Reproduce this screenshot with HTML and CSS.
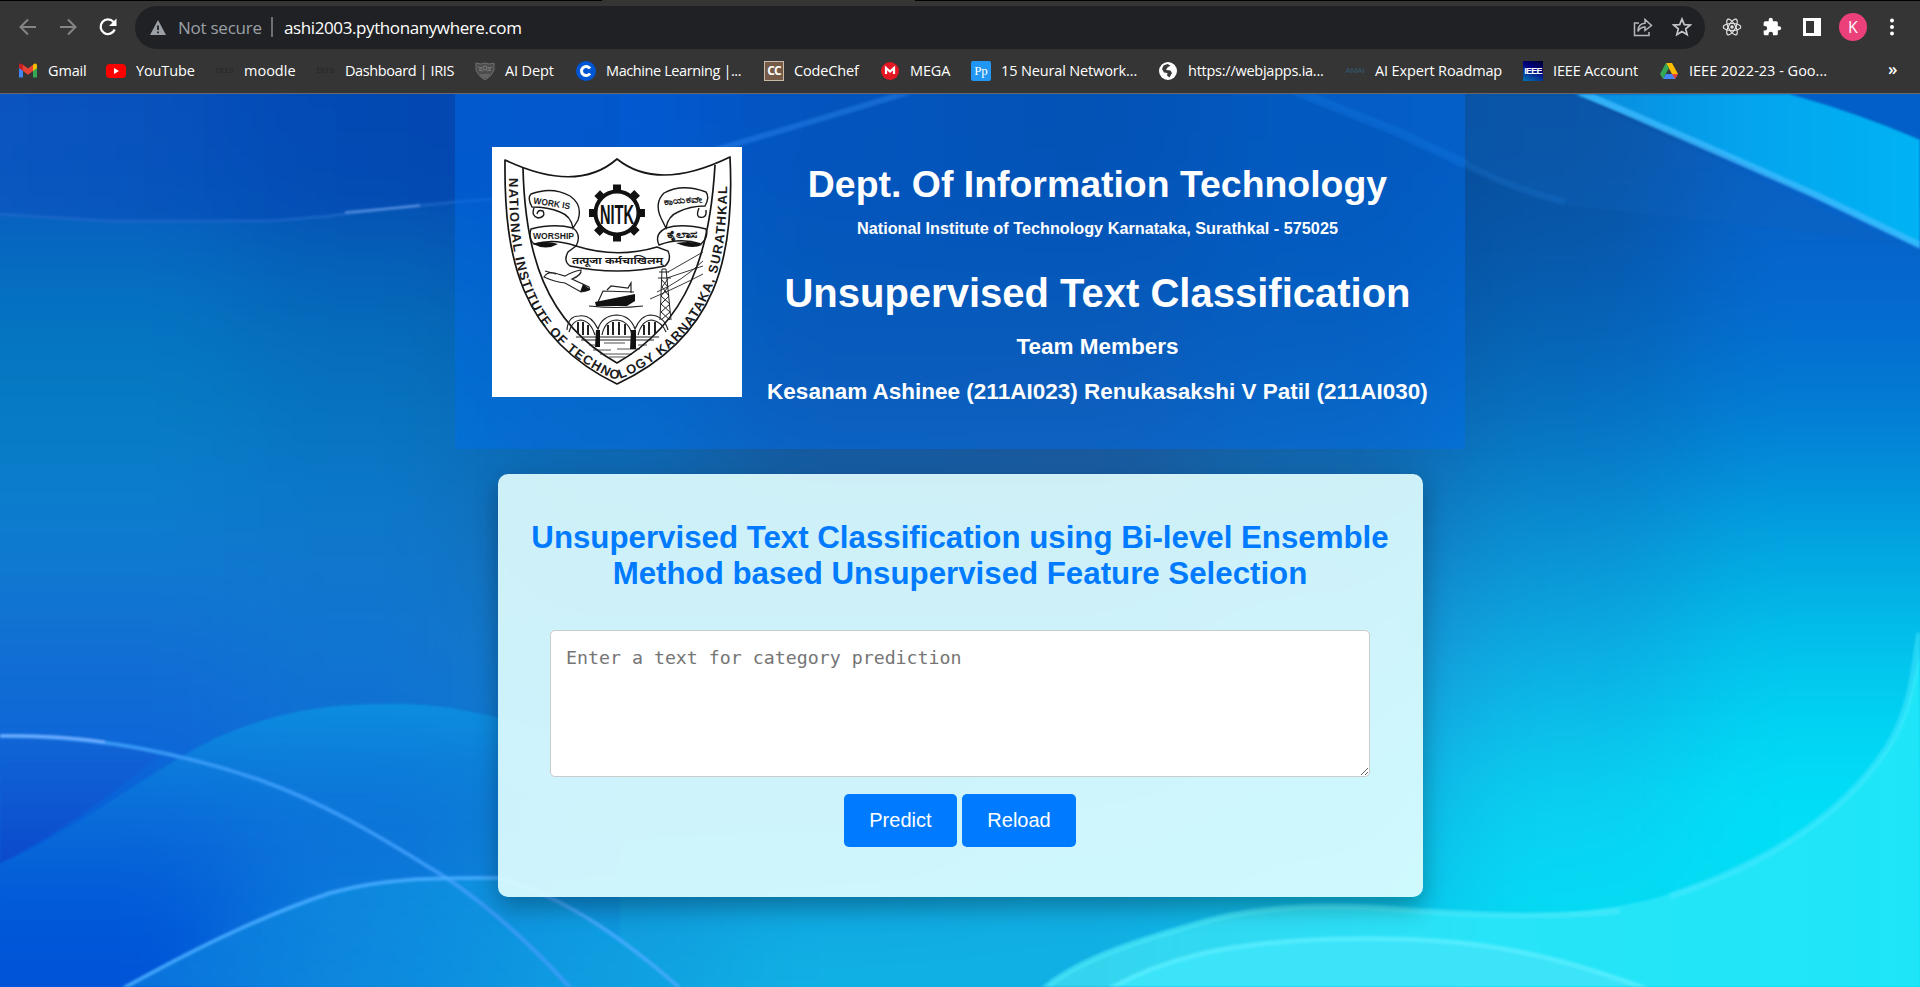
FILE: index.html
```html
<!DOCTYPE html>
<html lang="en">
<head>
<meta charset="utf-8">
<title>Unsupervised Text Classification</title>
<link rel="stylesheet" href="styles.css">
</head>
<body>
<div class="browser">
  <div class="tabstrip"><span class="active-tab"></span></div>
  <div class="toolbar">
    <svg class="nav" viewBox="0 0 20 20"><path d="M18 10H3M10 2.500L2.500 10L10 17.500" fill="none" stroke="#858585" stroke-width="2"/></svg>
    <svg class="nav" viewBox="0 0 20 20"><path d="M2 10H17M10 2.500L17.500 10L10 17.500" fill="none" stroke="#858585" stroke-width="2"/></svg>
    <svg class="nav" viewBox="0 0 20 20"><path d="M16.700 12.500A7.300 7.300 0 1 1 15.500 5" fill="none" stroke="#fff" stroke-width="2.300"/><path d="M18.500 1.500V9H11Z" fill="#fff"/></svg>
    <div class="omnibox">
      <svg class="warn" viewBox="0 0 16 15"><path d="M8 0L16 15H0Z" fill="#9aa0a6"/><path d="M8 5.500V10M8 11.500V13.200" stroke="#202124" stroke-width="1.800"/></svg>
      <span class="secure">Not secure</span>
      <span class="divider"></span>
      <span class="url">ashi2003.pythonanywhere.com</span>
      <svg class="share" viewBox="0 0 20 20"><path d="M6 6H1.500V18.500H16V15M5 14.500C5 9 8 6.500 12 6.300V2.500L18.500 8.500L12 13.500V10C9 10 6.500 11.500 5 14.500Z" fill="none" stroke="#b4b7ba" stroke-width="1.500"/></svg>
      <svg class="star" viewBox="0 0 20 20"><path d="M10 2L12.300 7.600L18.300 8L13.700 11.900L15.200 17.800L10 14.600L4.800 17.800L6.300 11.900L1.700 8L7.700 7.600Z" fill="none" stroke="#c4c7ca" stroke-width="1.700"/></svg>
    </div>
    <div class="actions">
      <svg viewBox="0 0 20 20"><g fill="none" stroke="#e4e4e4" stroke-width="1.200"><ellipse cx="10" cy="10" rx="8.800" ry="3.500"/><ellipse cx="10" cy="10" rx="8.800" ry="3.500" transform="rotate(60 10 10)"/><ellipse cx="10" cy="10" rx="8.800" ry="3.500" transform="rotate(120 10 10)"/></g><circle cx="10" cy="10" r="1.700" fill="#e4e4e4"/></svg>
      <svg viewBox="0 0 24 24"><path d="M20.500 11H19V7a2 2 0 0 0-2-2h-4V3.500a2.500 2.500 0 0 0-5 0V5H4a2 2 0 0 0-2 2v3.800h1.500a2.700 2.700 0 0 1 0 5.400H2V20a2 2 0 0 0 2 2h3.800v-1.500a2.700 2.700 0 0 1 5.400 0V22H17a2 2 0 0 0 2-2v-4h1.500a2.500 2.500 0 0 0 0-5Z" fill="#fff"/></svg>
      <svg viewBox="0 0 20 20"><path d="M1 1H19V19H1ZM4 4V16H12V4Z" fill="#fff" fill-rule="evenodd"/></svg>
      <span class="avatar">K</span>
      <svg class="dots" viewBox="0 0 20 20"><g fill="#fff"><circle cx="10" cy="3.500" r="2"/><circle cx="10" cy="10" r="2"/><circle cx="10" cy="16.500" r="2"/></g></svg>
    </div>
  </div>
  <div class="bookmarks">
    <div class="bm"><svg viewBox="0 0 20 20"><path d="M1 5V16.500H5V9Z" fill="#4285f4"/><path d="M15 9V16.500H19V5Z" fill="#34a853"/><path d="M1 5.500V4C1 2.500 3 2 4.200 3L5 3.700V10L1 7Z" fill="#c5221f"/><path d="M15 3.700L16 3C17.500 2 19 3 19 4.500V7L15 10Z" fill="#fbbc04"/><path d="M5 3.700L10 7.500L15 3.700V10L10 13.700L5 10Z" fill="#ea4335"/></svg><span>Gmail</span></div>
    <div class="bm"><svg viewBox="0 0 20 20"><rect y="3" width="20" height="14" rx="4" fill="#f00"/><path d="M8 7L13 10L8 13Z" fill="#fff"/></svg><span>YouTube</span></div>
    <div class="bm"><b class="iris">IRIS</b><span class="loose">moodle</span></div>
    <div class="bm"><b class="iris">IRIS</b><span class="tight">Dashboard | IRIS</span></div>
    <div class="bm"><svg viewBox="0 0 20 20"><path d="M1 2Q6 4 10 2Q14 4 19 2V9Q17 15 10 19Q3 15 1 9Z" fill="#4c4c4c" stroke="#707070"/><path d="M3 6L7 7L4 9L8 10M17 6L13 7L16 9L12 10M5 14H15M7 16H13" fill="none" stroke="#7b7b7b"/><circle cx="10" cy="7" r="2" fill="none" stroke="#808080"/></svg><span>AI Dept</span></div>
    <div class="bm"><svg viewBox="0 0 20 20"><circle cx="10" cy="10" r="10" fill="#0056d2"/><path d="M14 7.500A4.600 4.600 0 1 0 14 12.500" fill="none" stroke="#fff" stroke-width="3"/></svg><span class="tight">Machine Learning |...</span></div>
    <div class="bm"><b class="cc">CC</b><span>CodeChef</span></div>
    <div class="bm"><svg viewBox="0 0 20 20"><circle cx="10" cy="10" r="9" fill="#e21722"/><path d="M6 13V7L10 10.500L14 7V13" fill="none" stroke="#fff" stroke-width="2.200"/></svg><span>MEGA</span></div>
    <div class="bm"><b class="pp">Pp</b><span>15 Neural Network...</span></div>
    <div class="bm"><svg viewBox="0 0 20 20"><circle cx="10" cy="10" r="9" fill="#fff"/><path d="M5.500 4.500L9.500 3L12.500 4.500L9.500 6.500L8 9L12.500 9.500L14 12L11.500 16.500L9 14.500L9.500 12L6 11.500L4 8Z" fill="#3a3a3a"/></svg><span class="snug">https://webjapps.ia...</span></div>
    <div class="bm"><b class="amai">AMAI</b><span>AI Expert Roadmap</span></div>
    <div class="bm"><b class="ieee">IEEE</b><span>IEEE Account</span></div>
    <div class="bm"><svg viewBox="0 0 20 20"><path d="M7 2H13L19 13H13Z" fill="#fbbc04"/><path d="M7 2L10 7L4 18L1 13Z" fill="#34a853"/><path d="M7 13H19L16 18H4Z" fill="#4285f4"/><path d="M13 13H19L16 18Z" fill="#ea4335"/></svg><span class="loose">IEEE 2022-23 - Goo...</span></div>
    <span class="more">»</span>
  </div>
</div>

<main class="page">
  <svg class="backdrop" viewBox="-240 -240 2400 1373" preserveAspectRatio="none">
      <g><path fill="#0a56c0" d="M-300-300H240V128H-300Z"/><path fill="#0449b2" d="M240-300h240V128H240Z"/><path fill="#0546b8" d="M480-300h240V128H480Z"/><path fill="#073f94" d="M720-300h240V128H720Z"/><path fill="#073b88" d="M960-300h240V128H960Z"/><path fill="#054898" d="M1200-300h240V128h-240Z"/><path fill="#0850a0" d="M1440-300h240V128h-240Z"/><path fill="#0860c4" d="M1680-300h540V128h-540Z"/></g>
      <g><path fill="#0470c0" d="M-300 128H240V256H-300Z"/><path fill="#0566b8" d="M240 128h240V256H240Z"/><path fill="#0558ac" d="M480 128h240V256H480Z"/><path fill="#084890" d="M720 128h240V256H720Z"/><path fill="#08488e" d="M960 128h240V256H960Z"/><path fill="#084e98" d="M1200 128h240V256h-240Z"/><path fill="#065cb0" d="M1440 128h240V256h-240Z"/><path fill="#0466ce" d="M1680 128h540V256h-540Z"/></g>
      <g><path fill="#067cc4" d="M-300 256H240V384H-300Z"/><path fill="#0674c0" d="M240 256h240V384H240Z"/><path fill="#0a66b0" d="M480 256h240V384H480Z"/><path fill="#165094" d="M720 256h240V384H720Z"/><path fill="#1c5092" d="M960 256h240V384H960Z"/><path fill="#105ea4" d="M1200 256h240V384h-240Z"/><path fill="#0670c0" d="M1440 256h240V384h-240Z"/><path fill="#037cd4" d="M1680 256h540V384h-540Z"/></g>
      <g><path fill="#0f7cd0" d="M-300 384H240V512H-300Z"/><path fill="#0f78cc" d="M240 384h240V512H240Z"/><path fill="#146cb4" d="M480 384h720V512H480Z"/><path fill="#1474bc" d="M1200 384h240V512h-240Z"/><path fill="#0a90d4" d="M1440 384h240V512h-240Z"/><path fill="#02a4e0" d="M1680 384h540V512h-540Z"/></g>
      <g><path fill="#126cd4" d="M-300 512H240V640H-300Z"/><path fill="#1074d2" d="M240 512h240V640H240Z"/><path fill="#147cc8" d="M480 512h720V640H480Z"/><path fill="#1c90d4" d="M1200 512h240V640h-240Z"/><path fill="#0cb0e4" d="M1440 512h240V640h-240Z"/><path fill="#02c8ee" d="M1680 512h540V640h-540Z"/></g>
      <g><path fill="#0a64da" d="M-300 640H240V768H-300Z"/><path fill="#0e6cd8" d="M240 640h240V768H240Z"/><path fill="#0c80d0" d="M480 640h480V768H480Z"/><path fill="#10a0dc" d="M960 640h240V768H960Z"/><path fill="#10ace2" d="M1200 640h240V768h-240Z"/><path fill="#0ad0f0" d="M1440 640h240V768h-240Z"/><path fill="#00e0f8" d="M1680 640h540V768h-540Z"/></g>
      <g><path fill="#0054d8" d="M-300 768H240V1200H-300Z"/><path fill="#0c80dc" d="M240 768h240V1200H240Z"/><path fill="#10a0e0" d="M480 768h240V1200H480Z"/><path fill="#10b0e4" d="M720 768h480V1200H720Z"/><path fill="#0cc0e8" d="M1200 768h240V1200h-240Z"/><path fill="#04dcf4" d="M1440 768h780V1200h-780Z"/></g>
  </svg>
  <svg class="waves" viewBox="0 0 1920 893" preserveAspectRatio="none">
    <defs>
      <linearGradient id="top" x1="0" y1="0" x2="1" y2="0"><stop offset="0" stop-color="#0c54c0"/><stop offset=".45" stop-color="#034cb8"/><stop offset="1" stop-color="#0444a8"/></linearGradient>
      <linearGradient id="hill" x1="0" y1="0" x2="0" y2="1"><stop offset="0" stop-color="#0c92e2" stop-opacity=".85"/><stop offset=".5" stop-color="#0c78d8" stop-opacity=".3"/><stop offset="1" stop-color="#0060d8" stop-opacity="0"/></linearGradient>
      <linearGradient id="deep" x1="0" y1="0" x2="0" y2="1"><stop offset="0" stop-color="#1464d4" stop-opacity=".6"/><stop offset="1" stop-color="#0c48cc"/></linearGradient>
      <linearGradient id="low" x1="0" y1="0" x2="1" y2="0"><stop offset="0" stop-color="#0c78dc"/><stop offset="1" stop-color="#10a4e2"/></linearGradient>
      <linearGradient id="band" x1="0" y1="0" x2="1" y2="0"><stop offset="0" stop-color="#0a88dc"/><stop offset=".5" stop-color="#04a4ee"/><stop offset="1" stop-color="#00b4f4"/></linearGradient>
      <linearGradient id="wave" x1="0" y1="0" x2="1" y2="0"><stop offset="0" stop-color="#36d2ee"/><stop offset=".5" stop-color="#28e4f8"/><stop offset="1" stop-color="#1ee6f8"/></linearGradient>
    </defs>
      <path d="M-10-10H620V95L455 108L385 115L270 128H110L-10 120Z" fill="url(#top)" opacity=".6"/>
      <path d="M-5 120L110 127H270L330 122L385 115L455 108L620 94" fill="none" stroke="#2c72d0" stroke-width="3" opacity=".5"/>
      <path d="M345 118.500L385 115L420 111.500" fill="none" stroke="#6298e6" stroke-width="2.500" opacity=".8"/>
      <path d="M-5 642C70 640 120 648 160 662C110 700 60 741 -5 772Z" fill="url(#deep)"/>
      <path d="M-5 772C70 740 130 691 200 652C260 621 320 610 380 610C450 608 500 622 620 660V893H-5Z" fill="url(#hill)"/>
      <path d="M110 900C180 863 250 826 330 799C390 782 450 784 500 784C550 800 630 850 690 900Z" fill="url(#low)" opacity=".8"/>
      <path d="M-5 642C100 640 190 662 260 686C340 715 400 756 445 783C500 820 540 860 572 896" fill="none" stroke="#3c9cf8" stroke-width="4" opacity=".9"/>
      <path d="M-5 642C40 641 70 643 105 648" fill="none" stroke="#70acff" stroke-width="3"/>
      <path d="M120 896C180 863 250 826 330 799C390 782 450 784 500 784C570 805 630 850 682 896" fill="none" stroke="#48acff" stroke-width="4" opacity=".85"/>
      <path d="M620 84C700 60 800 32 915-4" fill="none" stroke="#5298ee" stroke-width="6" opacity=".45"/>
      <path d="M1290-5L1400 39L1465 70Q1510 95 1570 112Q1700 125 1900 150L1560-5Z" fill="#1064bc" opacity=".3"/>
      <path d="M1290-5L1400 39L1465 70" fill="none" stroke="#207ad4" stroke-width="9" opacity=".4"/>
      <path d="M1465 70Q1510 95 1565 108" fill="none" stroke="#207ad4" stroke-width="7" opacity=".25"/>
      <path d="M1560-5Q1690 43 1820 105L1930 158V-5Z" fill="url(#band)"/>
      <path d="M1770-5Q1850 15 1930 50V-5Z" fill="#025ec8"/>
      <path d="M1580-2Q1690 45 1820 103L1930 156" fill="none" stroke="#40bcff" stroke-width="7" opacity=".75"/>
      <path d="M1930 520C1914 570 1914 615 1887 654C1840 725 1760 772 1670 800C1590 824 1500 823 1420 817C1320 808 1250 812 1186 833C1120 852 1070 870 1038 900H1930Z" fill="url(#wave)"/>
      <path d="M1920 539C1914 575 1912 615 1887 654C1840 725 1760 772 1670 802" fill="none" stroke="#4aeaff" stroke-width="7" opacity=".5"/>
      <path d="M1620 817C1540 825 1480 820 1420 817C1320 808 1250 812 1186 833C1120 852 1070 870 1038 900" fill="none" stroke="#4ceafa" stroke-width="6" opacity=".6"/>
      <path d="M1100 900C1160 865 1220 849 1330 845C1460 841 1540 855 1650 896Z" fill="#3ce4fa"/>
      <path d="M1100 900C1160 865 1220 849 1330 845C1460 841 1540 855 1650 896" fill="none" stroke="#5cf0ff" stroke-width="5" opacity=".7"/>
  </svg>

  <header class="banner">
    <svg class="crest" viewBox="0 0 250 250">
      <rect width="250" height="250" fill="#fff"/>
      <g fill="none" stroke="#161616" stroke-width="1.700" stroke-linejoin="round">
        <path d="M13 13Q85 47 125 12Q166 45 238 10C243 110 225 190 125 237C28 190 12 110 13 13Z"/>
        <path d="M31 21C33 105 52 175 125 216C197 175 218 105 223 18"/>
      </g>
      <path id="rim" d="M17 31C17 112 26 185 114 228.500Q125 235 136 228.500C224 185 236 112 235 27" fill="none"/>
      <text class="rim-text"><textPath href="#rim" textLength="486" lengthAdjust="spacing">NATIONAL INSTITUTE OF TECHNOLOGY KARNATAKA, SURATHKAL</textPath></text>
      <g fill="#111"><g id="teeth"><path d="M121 37.500H129V44H121ZM121 88H129V94.500H121ZM97 62H103V70H97ZM147 62H153V70H147Z"/></g><use href="#teeth" transform="rotate(45 125 66)"/></g>
      <circle cx="125" cy="66" r="21.500" fill="#fff" stroke="#111" stroke-width="4"/>
      <text class="nitk" x="108" y="76.500" textLength="34" lengthAdjust="spacingAndGlyphs">NITK</text>
      <g fill="none" stroke="#191919" stroke-width="1.400">
        <path d="M40 60Q35 51 39 47Q60 39 78 49Q91 58 86 73L81 81Q79 69 68 65Q56 60 40 60ZM42 61Q39 69 46 71Q54 70 51 64Q46 62 45 67M81 81Q90 88 84 99Q62 91 42 97Q36 91 39 82Q62 76 81 81M84 99L76 105Q71 114 78 119Q125 129 173 119Q180 113 176 104L165 100Q125 112 84 99"/>
        <path d="M213 59Q218 50 214 45Q190 36 172 46Q162 56 169 71L174 81Q176 69 186 65Q198 59 213 59ZM207 61Q204 68 207 70Q215 72 214 63M174 81Q162 87 167 98Q188 90 209 97Q217 90 214 82Q190 76 174 81"/>
      </g>
      <path d="M41 97Q54 93 66 97Q54 104 41 97ZM184 96Q202 93 210 98Q200 103 184 96Z" fill="#111"/>
      <g class="ribbon-text">
        <text x="41" y="56.500" transform="rotate(9 41 57)" textLength="37" lengthAdjust="spacingAndGlyphs">WORK IS</text>
        <text x="41" y="92" textLength="41" lengthAdjust="spacingAndGlyphs">WORSHIP</text>
        <text x="172" y="58" transform="rotate(-4 172 58)" textLength="39" lengthAdjust="spacingAndGlyphs">ಕಾಯಕವೇ</text>
        <text x="175" y="91" textLength="31" lengthAdjust="spacingAndGlyphs">ಕೈಲಾಸ</text>
        <text x="80" y="117" textLength="91" lengthAdjust="spacingAndGlyphs">तत्पूजा कर्मचाखिलम्</text>
      </g>
      <g fill="none" stroke="#222" stroke-width="1.200">
        <path d="M52 130Q56 123 66 127L73 129Q82 124 89 123Q90 128 80 132L97 140Q99 144 89 145L73 136Q63 135 52 130ZM64 127L53 124"/>
        <path d="M176 125L211 105M175 131L211 119M158 152Q188 139 211 127M165 145Q190 134 211 114" stroke-width=".9"/>
        <path d="M168 173L170 122H174L179 173M169 132L176 140L169 149L178 157L169 165L178 173M176 132L170 140L177 149L169 157L178 165L169 173M167 125H177M166 131H179" stroke-width="1"/>
        <path d="M97 159Q125 162 151 159M106 155L111 144L142 145M115 143L119 139L136 141L139 136V146"/>
        <path d="M75 183Q76 169 87 169Q99 167 106 182Q110 169 124 168Q138 168 143 182Q149 168 159 168Q172 169 176 183M77 185Q80 174 88 173Q98 173 103 188M110 188Q113 173 125 173Q137 174 140 188M146 188Q150 173 160 173Q170 175 174 185M84 190H167M89 193H162"/>
        <path d="M86 175v12M91 175v13M96 178v10M116 178v10M121 175v13M127 175v13M133 177v11M152 178v10M157 175v13M163 175v12" stroke-width="2"/>
        <path d="M97 198H103M112 196H133M146 198H155M101 203H119M125 202H148M108 207H140M117 210H133" stroke-width=".8"/>
      </g>
      <path d="M103 155L143 147V154L135 159H104ZM91 137L99 143L88 145ZM104 183H108V200H103ZM139 183H144V202H138Z" fill="#111"/>
    </svg>
    <div class="titles">
      <h3 class="dept">Dept. Of Information Technology</h3>
      <p class="inst">National Institute of Technology Karnataka, Surathkal - 575025</p>
      <h1 class="proj">Unsupervised Text Classification</h1>
      <p class="team">Team Members</p>
      <p class="names">Kesanam Ashinee (211AI023) Renukasakshi V Patil (211AI030)</p>
    </div>
  </header>

  <section class="card">
    <h2 class="card-title">Unsupervised Text Classification using Bi-level Ensemble<br>Method based Unsupervised Feature Selection</h2>
    <textarea class="entry" placeholder="Enter a text for category prediction"></textarea>
    <div class="buttons"><button>Predict</button><button>Reload</button></div>
  </section>
</main>
</body>
</html>
```
FILE: styles.css
```css
* { box-sizing: border-box; }
body { margin: 0; width: 1920px; height: 987px; overflow: hidden; font-family: "Liberation Sans", Arial, sans-serif; }

/* browser frame */
.browser { height: 94px; background: #353535; border-bottom: 1px solid #686868; font-family: "Open Sans", "Noto Sans", sans-serif; color: #fff; }
.tabstrip { height: 1px; background: #000; padding-left: 602px; }
.active-tab { display: block; width: 313px; height: 1px; background: #353535; }
.toolbar { height: 52px; display: flex; align-items: center; padding-left: 18px; }
.nav { width: 20px; height: 20px; margin-right: 20px; }
.omnibox { width: 1570px; height: 43px; margin-left: -3px; border-radius: 22px; background: #202124; display: flex; align-items: center; padding: 0 13px 0 15px; font-size: 17px; }
.warn { width: 16px; height: 15px; margin-right: 12px; }
.secure { width: 93px; color: #9aa0a6; white-space: nowrap; letter-spacing: -0.25px; }
.divider { width: 2px; height: 20px; background: #6c6f73; margin-right: 11px; }
.url { flex: 1; white-space: nowrap; letter-spacing: -0.4px; }
.share { width: 20px; height: 20px; margin-right: 19px; }
.star { width: 20px; height: 20px; }
.actions { display: flex; align-items: center; padding-left: 17px; }
.actions svg { width: 20px; height: 20px; margin-right: 20px; }
.avatar { width: 28px; height: 28px; margin-right: 15px; margin-left: -3px; border-radius: 50%; background: #ec407a; font-size: 16px; line-height: 28px; text-align: center; }
.actions .dots { margin-right: 0; }
.bookmarks { height: 35px; display: grid; grid-template-columns: 88px 108px 101px 160px 101px 188px 116px 91px 187px 187px 178px 136px 229px auto; padding-left: 18px; align-items: center; font-size: 14.5px; letter-spacing: -0.14px; }
.bm { display: flex; align-items: center; gap: 10px; white-space: nowrap; }
.bm span { margin-top: -1px; }
.bm .loose { letter-spacing: 0; }
.bm .snug { letter-spacing: -0.25px; }
.bm .tight { letter-spacing: -0.4px; }
.bm svg, .bm b { width: 20px; height: 20px; flex: none; line-height: 20px; text-align: center; }
.bm .iris { color: #252525; font: 8px/20px "Liberation Mono", monospace; }
.bm .cc { background: #755a48; border: 1px solid #c9baa8; font-size: 12px; line-height: 17px; letter-spacing: -1px; }
.bm .pp { background: #2196f3; border-radius: 2px; font: 13px/19px "Liberation Serif", serif; }
.bm .amai { color: #315a72; font: 8px/20px "Liberation Sans", sans-serif; }
.bm .ieee { background: linear-gradient(25deg, #0078b4, #000080 60%, #000030); font: bold 9px/20px "Liberation Sans", sans-serif; letter-spacing: -0.7px; }
.more { font-size: 17px; font-weight: 600; margin-top: -4px; }

/* page */
.page { position: relative; height: 893px; overflow: hidden; display: flex; flex-direction: column; align-items: center; }
.backdrop { position: absolute; top: -240px; left: -240px; width: 2400px; height: 1373px; filter: blur(58px); }
.waves { position: absolute; inset: 0; width: 1920px; height: 893px; filter: blur(1.2px); }
.banner { position: relative; width: 1010px; height: 355px; padding: 53px 37px 0; display: flex; gap: 25px; background: rgba(0, 110, 240, .45); color: #fff; }
.crest { width: 250px; height: 250px; flex: none; }
.rim-text { font: bold 13px "Liberation Sans", sans-serif; fill: #1b1b1b; }
.nitk { font: bold 27px "Liberation Sans", sans-serif; fill: #111; }
.ribbon-text { font: bold 9px "Liberation Sans", "Noto Sans", sans-serif; fill: #1b1b1b; }
.titles { width: 661px; text-align: center; font-weight: bold; white-space: nowrap; display: flex; flex-direction: column; align-items: center; }
.titles > * { margin: 0; }
.dept { font-size: 37.44px; line-height: 44px; margin-top: 15px; }
.inst { font-size: 16.25px; line-height: 18px; margin-top: 13px; }
.proj { font-size: 40px; line-height: 46px; margin-top: 33px; }
.team { font-size: 22.5px; line-height: 26px; margin-top: 18px; }
.names { font-size: 22.5px; line-height: 26px; margin-top: 19px; }
.card { position: relative; width: 925px; height: 423px; margin-top: 25px; padding: 46px 0 0; border-radius: 10px; background: rgba(225, 254, 255, .91); box-shadow: 0 10px 25px rgba(0, 0, 0, .3); display: flex; flex-direction: column; align-items: center; }
.card-title { margin: 0; font-size: 31.25px; line-height: 36px; color: #007bff; text-align: center; white-space: nowrap; }
.entry { width: 820px; height: 147px; margin-top: 38px; padding: 15px; border: 1px solid #ccc; border-radius: 5px; background: #fff; font: 18.25px/24px "DejaVu Sans Mono", monospace; }
.entry::placeholder { color: #757575; opacity: 1; }
.buttons { display: flex; gap: 5px; margin-top: 17px; }
.buttons button { height: 53px; padding: 15px 25.4px; border: 0; border-radius: 5px; background: #007bff; color: #fff; font: 20px/23px "Liberation Sans", Arial, sans-serif; }
```
